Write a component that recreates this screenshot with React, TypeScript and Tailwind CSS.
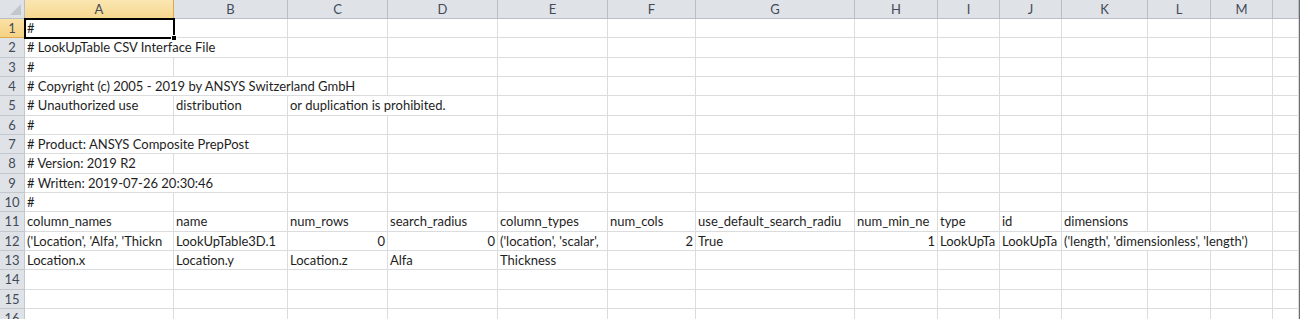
import { Fragment } from "react";

type Cell = { text: string; span?: number; right?: boolean };

const columns = ["A", "B", "C", "D", "E", "F", "G", "H", "I", "J", "K", "L", "M", ""];

const spanClass: Record<number, string> = {
  1: "",
  2: "col-span-2",
  3: "col-span-3",
};

// each row lists cells from column A; null = empty cell
const rows: (Cell | null)[][] = [
  [{ text: "#" }],
  [{ text: "# LookUpTable CSV Interface File", span: 2 }],
  [{ text: "#" }],
  [{ text: "# Copyright (c) 2005 - 2019 by ANSYS Switzerland GmbH", span: 3 }],
  [{ text: "# Unauthorized use" }, { text: "distribution" }, { text: "or duplication is prohibited.", span: 2 }],
  [{ text: "#" }],
  [{ text: "# Product: ANSYS Composite PrepPost", span: 2 }],
  [{ text: "# Version: 2019 R2" }],
  [{ text: "# Written: 2019-07-26 20:30:46", span: 2 }],
  [{ text: "#" }],
  [
    { text: "column_names" },
    { text: "name" },
    { text: "num_rows" },
    { text: "search_radius" },
    { text: "column_types" },
    { text: "num_cols" },
    { text: "use_default_search_radiu" },
    { text: "num_min_ne" },
    { text: "type" },
    { text: "id" },
    { text: "dimensions" },
  ],
  [
    { text: "('Location', 'Alfa', 'Thickn" },
    { text: "LookUpTable3D.1" },
    { text: "0", right: true },
    { text: "0", right: true },
    { text: "('location', 'scalar'," },
    { text: "2", right: true },
    { text: "True" },
    { text: "1", right: true },
    { text: "LookUpTa" },
    { text: "LookUpTa" },
    { text: "('length', 'dimensionless', 'length')", span: 3 },
  ],
  [
    { text: "Location.x" },
    { text: "Location.y" },
    { text: "Location.z" },
    { text: "Alfa" },
    { text: "Thickness" },
  ],
  [],
  [],
  [],
];

function Row({ cells }: { cells: (Cell | null)[] }) {
  const out = [];
  let col = 0;
  for (const cell of cells) {
    const span = cell?.span ?? 1;
    out.push(
      <div
        key={col}
        className={`flex items-center overflow-hidden whitespace-nowrap border-r border-b border-[#dadcdd] px-[2px] pt-[1px] ${spanClass[span]} ${cell?.right ? "justify-end" : ""}`}
      >
        {cell?.text}
      </div>
    );
    col += span;
  }
  while (col < columns.length) {
    out.push(<div key={col} className="border-r border-b border-[#dadcdd]" />);
    col++;
  }
  return out;
}

const headCls = "flex items-center justify-center border-r border-b pt-[1px] text-[13px] text-[#434a57]";

export default function App() {
  return (
    <div className="h-[319px] w-[1300px] overflow-hidden bg-white" style={{ fontFamily: "Lato, 'Open Sans', sans-serif" }}>
      <div className="relative grid w-[1300px] grid-cols-[25px_149px_114px_100px_110px_110px_88px_159px_83px_62px_62px_86px_63px_62px_26px] grid-rows-[19px_repeat(16,19.33px)] border-r border-[#6d6d6d] text-[13px] text-[#1e1e1e]">
        {/* corner */}
        <div className="relative border-r border-b border-[#b9bec6] bg-[#dfe3e8]">
          <svg className="absolute right-[3px] bottom-[3px]" width="11" height="11" viewBox="0 0 11 11">
            <path d="M11 0 L11 11 L0 11 Z" fill="#c2c7ce" />
          </svg>
        </div>
        {columns.map((c, i) =>
          i === 0 ? (
            <div key={c} className={`${headCls} border-[#e2a94a] bg-gradient-to-b from-[#fbe6b2] to-[#f6d88f]`}>
              {c}
            </div>
          ) : (
            <div key={c + i} className={`${headCls} border-[#b9bec6] bg-[#dfe3e8]`}>
              {c}
            </div>
          )
        )}
        {rows.map((cells, r) => (
          <Fragment key={r}>
            <div
              className={
                r === 0
                  ? `${headCls} border-[#e2a94a] bg-gradient-to-b from-[#fbe2a6] to-[#f5d283]`
                  : `${headCls} border-[#c3c8cf] bg-[#dfe3e8]`
              }
            >
              {r + 1}
            </div>
            <Row cells={cells} />
          </Fragment>
        ))}
        {/* selected cell A1 */}
        <div className="pointer-events-none absolute top-[18px] left-[24px] h-[21px] w-[151px] border-2 border-black">
          <div className="absolute -right-[4px] -bottom-[4px] size-[6px] border border-white bg-black" />
        </div>
      </div>
    </div>
  );
}
